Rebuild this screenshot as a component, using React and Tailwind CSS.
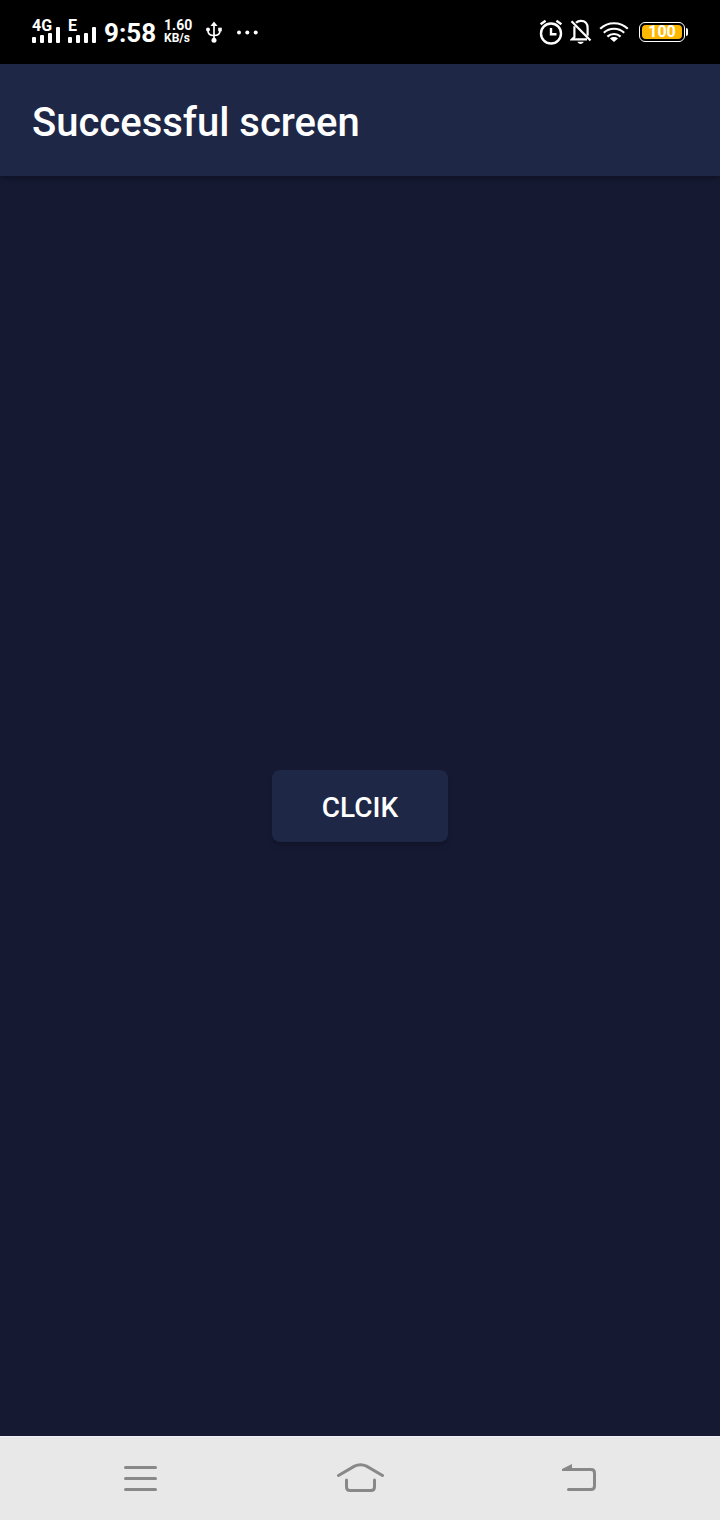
import React from 'react';

function Signal({ label }) {
  return (
    <div className="relative flex h-6 w-7 items-end justify-between pb-px">
      <span className="absolute left-0 top-0 text-base leading-3 font-bold">{label}</span>
      <span className="h-1.5 w-1 rounded-[1px] bg-white" />
      <span className="h-2 w-1 rounded-[1px] bg-white" />
      <span className="h-2.5 w-1 rounded-[1px] bg-white" />
      <span className="h-4 w-1 rounded-[1px] bg-white" />
    </div>
  );
}

function UsbIcon() {
  return (
    <svg width="16" height="22" viewBox="0 0 16 22" fill="none" stroke="#fff" strokeWidth="1.7" aria-hidden="true">
      <path d="M8 3v16M2 8.5V10c0 3 2 4.5 6 4.5M14 8.5V10c0 3-2 4.5-6 4.5" />
      <path d="M8 .5 11.500 5h-7z" fill="#fff" stroke="none" />
      <circle cx="2" cy="8.5" r="2" fill="#fff" stroke="none" />
      <path d="M12.2 6.7h3.6v3.6h-3.6z" fill="#fff" stroke="none" />
      <circle cx="8" cy="19.2" r="2.5" fill="#fff" stroke="none" />
    </svg>
  );
}

function AlarmIcon() {
  return (
    <svg width="24" height="26" viewBox="0 0 24 26" fill="none" stroke="#fff" strokeWidth="2.4" aria-hidden="true">
      <circle cx="12" cy="14.5" r="10" />
      <path d="M12 9v6.2h5.5M1.6 5.2l5-3.4M22.4 5.2l-5-3.4" />
    </svg>
  );
}

function MutedBellIcon() {
  return (
    <svg width="22" height="26" viewBox="0 0 22 26" fill="none" stroke="#fff" strokeWidth="2.2" aria-hidden="true">
      <path d="M6 3.8C7.3 2.4 9 1.8 11 1.8c4.2 0 6.6 3 6.6 7v8" />
      <path d="M4.4 7.2V18L2 20.4h15" />
      <path d="M1.5 2.2l19 19.3" />
      <path d="M7.500 22.8h6.200c-.5 1.4-1.600 2.100-3.100 2.100s-2.600-.7-3.100-2.100z" fill="#fff" stroke="none" />
    </svg>
  );
}

function WifiIcon() {
  return (
    <svg width="30" height="20" viewBox="0 0 30 20" fill="none" stroke="#fff" strokeWidth="2.2" aria-hidden="true">
      <path d="M1.2 6.8C9-.6 21-.6 28.8 6.8M4.8 10.8c5.8-5.4 14.6-5.4 20.4 0M8.4 14.6c3.8-3.500 9.400-3.500 13.200 0" />
      <path d="M11 16.5c2.4-1.900 5.600-1.900 8 0L15 20z" fill="#fff" stroke="none" />
    </svg>
  );
}

function StatusBar() {
  return (
    <div className="flex h-16 shrink-0 items-center justify-between bg-black px-8 text-white">
      <div className="flex items-center gap-2">
        <Signal label="4G" />
        <Signal label="E" />
        <span className="pt-0.5 text-[26px] leading-8 font-bold">9:58</span>
        <div className="text-sm leading-3 font-bold">
          <div>1.60</div>
          <div className="text-xs leading-[14px]">KB/s</div>
        </div>
        <div className="flex items-center gap-3.5 pl-1.5">
          <UsbIcon />
          <svg width="24" height="6" viewBox="0 0 24 6" fill="#fff" aria-hidden="true">
            <circle cx="3" cy="3.5" r="2" />
            <circle cx="11.3" cy="3.5" r="2" />
            <circle cx="19.7" cy="3.5" r="2" />
          </svg>
        </div>
      </div>
      <div className="flex items-center">
        <div className="flex items-center gap-[7px]">
          <AlarmIcon />
          <MutedBellIcon />
          <WifiIcon />
        </div>
        <div className="ml-2.5 flex items-center gap-px">
          <div className="flex h-5 w-[46px] rounded-md border border-white p-0.5">
            <div className="flex flex-1 items-center justify-center rounded-sm bg-[#ffb800] text-base leading-4 font-bold">
              100
            </div>
          </div>
          <span className="h-2 w-0.5 rounded-r-sm bg-white" />
        </div>
      </div>
    </div>
  );
}

function NavigationBar() {
  return (
    <nav className="grid h-[84px] shrink-0 grid-cols-[1fr_160px_1fr] bg-[#e8e8e8] text-[#888888] inset-shadow-[0_1px_#f3f1f8]">
      <button type="button" aria-label="Recent apps" className="flex items-center justify-center">
        <svg width="36" height="30" viewBox="0 0 36 30" fill="none" stroke="currentColor" strokeWidth="3" strokeLinecap="round" aria-hidden="true">
          <path d="M3.5 4.5h30M3.5 15.5h30M3.5 26.5h30" />
        </svg>
      </button>
      <button type="button" aria-label="Home" className="flex items-center justify-center">
        <svg width="48" height="30" viewBox="0 0 48 30" fill="none" stroke="currentColor" strokeWidth="3" strokeLinecap="round" aria-hidden="true">
          <path d="M2.5 12.5 18.5 3.2c4-1.9 8-1.9 12 0l16 9.3" />
          <path d="M10.5 17v7c0 2.5 1 3.5 3.5 3.5h21c2.5 0 3.5-1 3.5-3.5v-7" />
        </svg>
      </button>
      <button type="button" aria-label="Back" className="flex items-center justify-center">
        <svg width="38" height="30" viewBox="0 0 38 30" fill="none" stroke="currentColor" strokeWidth="3" strokeLinecap="round" aria-hidden="true">
          <path d="M5 6.5h25c2.5 0 3.5 1 3.5 3.5v13c0 2.5-1 3.5-3.5 3.5H7.5" />
          <path d="M1 8V6l10-5v7z" fill="currentColor" stroke="none" />
        </svg>
      </button>
    </nav>
  );
}

export default function App() {
  return (
    <div className="flex min-h-screen flex-col bg-[#151932] font-['Roboto',sans-serif]">
      <StatusBar />
      <header className="flex h-28 shrink-0 items-center bg-[#1e2746] px-8 pt-1.5 shadow-md shadow-black/20">
        <h1 className="text-[40px] leading-12 font-medium text-white">Successful screen</h1>
      </header>
      <main className="flex flex-1 items-center justify-center">
        <button
          type="button"
          className="flex h-18 w-44 items-center justify-center rounded-lg bg-[#1e2746] pt-1 text-[28px] leading-8 font-medium text-white shadow-md shadow-black/15"
        >
          CLCIK
        </button>
      </main>
      <NavigationBar />
    </div>
  );
}
